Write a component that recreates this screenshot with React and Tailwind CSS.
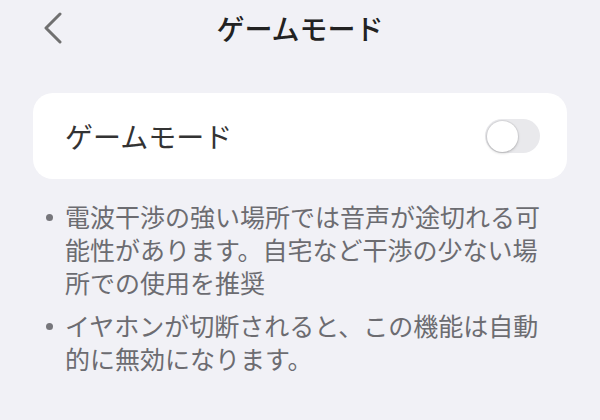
import { useState } from 'react'

const notes = [
  '電波干渉の強い場所では音声が途切れる可能性があります。自宅など干渉の少ない場所での使用を推奨',
  'イヤホンが切断されると、この機能は自動的に無効になります。',
]

function Toggle({ on, onChange }) {
  return (
    <button
      onClick={() => onChange(!on)}
      className={`flex h-[34px] w-[55px] items-center rounded-full p-[1.5px] ${on ? 'justify-end bg-[#34c759]' : 'justify-start bg-[#e9e9ec]'}`}
    >
      <span className="block h-[31px] w-[31px] rounded-full bg-white shadow-[0_1px_3px_rgba(0,0,0,0.22)] ring-1 ring-black/5" />
    </button>
  )
}

export default function App() {
  const [gameMode, setGameMode] = useState(false)

  return (
    <div
      className="min-h-[420px] w-[600px] bg-[#f1f1f6]"
      style={{ fontFamily: '"Noto Sans CJK JP", "Noto Sans", sans-serif' }}
    >
      {/* Header */}
      <div className="grid h-[55px] grid-cols-[1fr_auto_1fr] items-center">
        <div className="pl-[42px]">
          <svg width="22" height="32" viewBox="0 0 22 32" fill="none">
            <path
              d="M18 2 L4 16 L18 30"
              stroke="#707070"
              strokeWidth="3"
              strokeLinecap="round"
              strokeLinejoin="round"
            />
          </svg>
        </div>
        <h1 className="text-[28px] font-medium leading-none text-[#222222]">ゲームモード</h1>
        <div />
      </div>

      {/* Setting card */}
      <div className="mx-[33px] mt-[38px] flex h-[86px] items-center justify-between rounded-[20px] bg-white pl-8 pr-[27px]">
        <span className="text-[28px] leading-none text-[#333333]">ゲームモード</span>
        <Toggle on={gameMode} onChange={setGameMode} />
      </div>

      {/* Notes */}
      <ul className="mt-[21px] flex w-[555px] flex-col gap-[10px] pl-[46px]">
        {notes.map((text) => (
          <li key={text} className="flex gap-[12px] text-[25px] leading-[33px] text-[#6c6c71]">
            <span className="mt-[14px] h-[7px] w-[7px] shrink-0 rounded-full bg-[#76767b]" />
            <span>{text}</span>
          </li>
        ))}
      </ul>
    </div>
  )
}
